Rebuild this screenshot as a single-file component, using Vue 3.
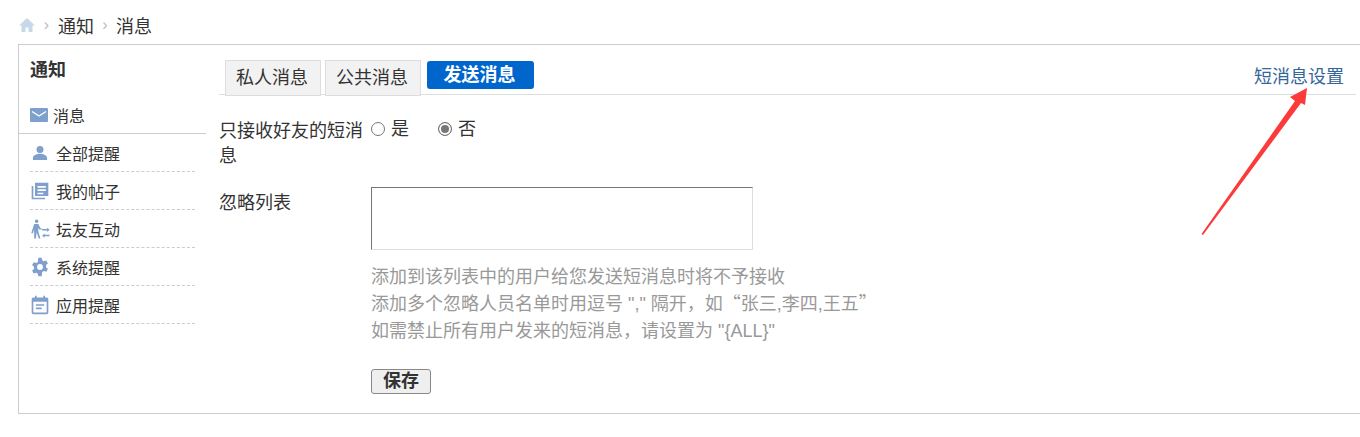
<script setup>
const items = [
  { label: '全部提醒', d: 'M12 3.500a4.200 4.200 0 1 1 0 8.400a4.200 4.200 0 0 1 0-8.400zM3.500 20.500v-2.500c0-3 4.500-5 8.500-5s8.500 2 8.500 5v2.500z' },
  { label: '我的帖子', d: 'M2 6h2v14h14v2H2zM6 2h16v16H6zM9 6v2h10V6zm0 4v2h10v-2zm0 4v2h7v-2z' },
  { label: '坛友互动', d: 'M8 0.500a2.200 2.200 0 1 1 0 4.400a2.200 2.200 0 0 1 0-4.400zM5 6h5l2.500 5h1.500v1.500h-3l-1-2v4.500l2.500 8.500h-2l-2.500-7.500l-1 7.500H5l0-11l-1.500 4.500H1.500zM14.500 12h6v-1.500l3 2.500l-3 2.500v-1.700h-6zM23.500 19h-6v-1.500l-3 2.500l3 2.500v-1.700h6z' },
  { label: '系统提醒', d: 'M10 1h4l.6 3a8 8 0 0 1 2 1.200l2.900-1l2 3.500l-2.300 2a8 8 0 0 1 0 2.600l2.300 2l-2 3.500l-2.900-1a8 8 0 0 1-2 1.200L14 23h-4l-.6-3a8 8 0 0 1-2-1.200l-2.900 1l-2-3.500l2.300-2a8 8 0 0 1 0-2.600l-2.300-2l2-3.500l2.900 1a8 8 0 0 1 2-1.200zM12 8.500a3.500 3.500 0 1 0 0 7a3.500 3.500 0 0 0 0-7z' },
  { label: '应用提醒', d: 'M6 1h2v2h8V1h2v2h2a2 2 0 0 1 2 2v16a2 2 0 0 1-2 2H4a2 2 0 0 1-2-2V5a2 2 0 0 1 2-2h2zM4 8v13h16V8zm3 3h10v2H7zm0 4h7v2H7z' }
]
</script>

<template>
  <div class="page">
    <nav class="crumbs">
      <svg class="home" viewBox="0 0 16 14" width="16" height="14"><path d="M8 0L16 7.500H13.500V14H9.500V9.500H6.500V14H2.500V7.500H0z" /></svg>
      <span class="sep">›</span>
      <span>通知</span>
      <span class="sep sep-last">›</span>
      <span>消息</span>
    </nav>
    <div class="box">
      <aside class="side">
        <h2 class="side-title">通知</h2>
        <div class="side-main">
          <svg viewBox="0 0 18 14" width="18" height="14" class="mail"><rect width="18" height="14" rx="1" fill="#7f9fcc" /><path d="M2 3.500L9 8L16 3.500" fill="none" stroke="#fff" stroke-width="1.400" /></svg>
          <span>消息</span>
        </div>
        <ul class="side-list">
          <li v-for="it in items" :key="it.label">
            <svg viewBox="0 0 24 24" width="20" height="20"><path :d="it.d" fill="#7f9fcc" fill-rule="evenodd" /></svg>
            <span>{{ it.label }}</span>
          </li>
        </ul>
      </aside>
      <main class="main">
        <div class="tabs">
          <a class="tab">私人消息</a>
          <a class="tab">公共消息</a>
          <a class="tab-send">发送消息</a>
          <a class="setting">短消息设置</a>
        </div>
        <div class="row row-radio">
          <label class="lab">只接收好友的短消息</label>
          <div class="radios">
            <span class="radio"><i class="dot"></i>是</span>
            <span class="radio"><i class="dot on"></i>否</span>
          </div>
        </div>
        <div class="row row-list">
          <label class="lab">忽略列表</label>
          <div class="field">
            <div class="area"></div>
            <p class="hint">添加到该列表中的用户给您发送短消息时将不予接收<br />添加多个忽略人员名单时用逗号 "," 隔开，如<span class="cjk">“</span>张三,李四,王五<span class="cjk">”</span><br />如需禁止所有用户发来的短消息，请设置为 "{ALL}"</p>
            <button class="save" type="button">保存</button>
          </div>
        </div>
      </main>
    </div>
    <svg class="arrow" width="120" height="160" viewBox="0 0 120 160"><path d="M0.500 147L94 14L89 10L106 1L104 18L100 16L2 148z" fill="#fd3a3a" /></svg>
  </div>
</template>

<style>
html, body { margin: 0; background: #fff; }
</style>

<style scoped>
.page { position: relative; width: 1360px; height: 437px; overflow: hidden; font-family: "Liberation Sans", "Noto Sans CJK SC", sans-serif; color: #333; }
.crumbs { height: 44px; padding: 5px 0 0 19px; display: flex; align-items: center; font-size: 18px; box-sizing: border-box; }
.home path { fill: #c7d9e8; }
.sep { color: #bbb; font-size: 16px; width: 23px; text-align: center; }
.sep-last { width: 22px; }
.box { margin-left: 18px; height: 370px; border: 1px solid #ccc; border-right: 0; box-sizing: border-box; display: flex; }
.side { width: 187px; flex: none; }
.side-title { margin: 13px 0 0 11px; font-size: 18px; line-height: 24px; font-weight: 700; }
.side-main { margin-top: 18px; height: 34px; display: flex; align-items: center; gap: 5px; padding: 0 0 4px 11px; box-sizing: border-box; border-bottom: 1px solid #ccc; font-size: 16px; }
.side-list { list-style: none; margin: 0 0 0 11px; padding: 0; width: 165px; font-size: 16px; }
.side-list li { height: 38px; box-sizing: border-box; border-bottom: 1px dashed #ccc; display: flex; align-items: center; gap: 6px; }
.main { flex: 1; padding-left: 13px; }
.tabs { position: relative; height: 50px; border-bottom: 1px solid #ddd; width: 1137px; box-sizing: border-box; display: flex; align-items: flex-start; padding: 15px 0 0 6px; }
.tab { width: 96px; height: 36px; box-sizing: border-box; margin-right: 4px; padding-right: 2px; border: 1px solid #ddd; background: #f2f2f2; font-size: 18px; line-height: 34px; text-align: center; }
.tab-send { margin: 1px 0 0 2px; width: 107px; height: 28px; box-sizing: border-box; padding-right: 2px; background: #0066cc; color: #fff; border-radius: 3px; font-size: 18px; font-weight: 700; line-height: 28px; text-align: center; }
.setting { margin-left: auto; margin-right: 12px; margin-top: 5px; color: #336699; font-size: 18px; line-height: 24px; }
.row { display: flex; }
.lab { width: 152px; flex: none; font-size: 18px; line-height: 25px; box-sizing: border-box; }
.row-radio { margin-top: 24px; height: 52px; }
.radios { display: flex; gap: 28px; font-size: 18px; line-height: 20px; }
.radio { display: flex; align-items: center; gap: 6px; height: 20px; width: 39px; }
.dot { width: 14px; height: 14px; flex: none; box-sizing: border-box; border: 1px solid #767676; border-radius: 50%; background: #fff; }
.dot.on { background: #777; box-shadow: inset 0 0 0 2px #fff; }
.row-list { margin-top: 16px; }
.row-list .lab { padding-top: 4px; }
.area { width: 382px; height: 63px; box-sizing: border-box; border: 1px solid; border-color: #767676 #ddd #ddd #767676; }
.hint { margin: 14px 0 0; color: #999; font-size: 18px; line-height: 27px; }
.cjk { font-family: "Noto Sans CJK SC", sans-serif; line-height: 0; }
.save { display: block; margin-top: 24px; width: 60px; height: 25px; padding: 0; box-sizing: border-box; border: 1px solid #888; border-radius: 3px; background: #efefef; color: #333; font: 700 18px/23px "Liberation Sans", "Noto Sans CJK SC", sans-serif; }
.arrow { position: absolute; left: 1201px; top: 87px; }
</style>
